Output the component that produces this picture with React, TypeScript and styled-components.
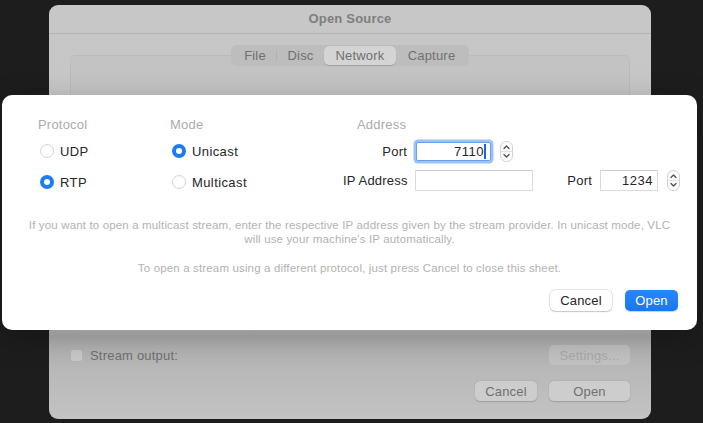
import React from 'react';
import styled, { createGlobalStyle } from 'styled-components';

const GlobalStyle = createGlobalStyle`
  html, body {
    margin: 0;
    padding: 0;
    background: #1d1d1d;
  }
  body {
    font-family: "Liberation Sans", Arial, sans-serif;
    letter-spacing: 0.2px;
    -webkit-font-smoothing: antialiased;
  }
`;

const Screen = styled.div`
  position: relative;
  width: 703px;
  height: 423px;
  overflow: hidden;
  box-sizing: border-box;
  padding-top: 5px;
  background: #1d1d1d;
`;

/* ---------- backdrop window ---------- */

const Window = styled.div`
  margin-left: 49px;
  width: 602px;
  height: 414px;
  border-radius: 9px;
  background: linear-gradient(#c7c7c7 0%, #c4c4c4 78%, #b1b1b1 80%, #c3c3c3 100%);
  display: flex;
  flex-direction: column;
  overflow: hidden;
`;

const TitleBar = styled.div`
  height: 27px;
  padding-bottom: 1px;
  flex-shrink: 0;
  border-bottom: 1px solid #b3b3b3;
  display: flex;
  align-items: center;
  justify-content: center;
  font-size: 13px;
  font-weight: bold;
  color: #7e7e7e;
`;

const TabPane = styled.div`
  display: flex;
  flex-direction: column;
  padding: 11px 21px 0;
`;

const Tabs = styled.div`
  align-self: center;
  position: relative;
  z-index: 1;
  display: flex;
  height: 21px;
  margin-bottom: -11px;
  padding: 0 2px;
  border-radius: 6px;
  background: #bdbdbd;
`;

const Tab = styled.div<{ $w: number; $active?: boolean; $sep?: boolean }>`
  width: ${(p) => p.$w}px;
  display: flex;
  align-items: center;
  justify-content: center;
  position: relative;
  font-size: 13px;
  color: #707070;
  border-radius: 5px;
  margin: 1px 0;
  background: ${(p) => (p.$active ? '#d4d4d4' : 'transparent')};
  box-shadow: ${(p) => (p.$active ? '0 0.5px 1px rgba(0,0,0,0.15)' : 'none')};
  &::after {
    content: '';
    display: ${(p) => (p.$sep ? 'block' : 'none')};
    position: absolute;
    right: 0;
    top: 5px;
    bottom: 5px;
    width: 1px;
    background: #b0b0b0;
  }
`;

const TabBox = styled.div`
  height: 277px;
  box-sizing: border-box;
  border: 1px solid #bbbbbb;
  border-radius: 5px;
  background: #c3c3c3;
`;

const StreamRow = styled.div`
  display: flex;
  align-items: center;
  justify-content: space-between;
  height: 20px;
  margin: 13px 21px 0;
`;

const CheckLabel = styled.label`
  display: flex;
  align-items: center;
  gap: 7px;
  font-size: 13px;
  color: #707070;
`;

const CheckBox = styled.span`
  width: 13px;
  height: 13px;
  box-sizing: border-box;
  border: 1px solid #b4b4b4;
  border-radius: 3px;
  background: #c9c9c9;
`;

const BackButton = styled.div<{ $w: number; $disabled?: boolean }>`
  width: ${(p) => p.$w}px;
  height: 20px;
  display: flex;
  align-items: center;
  justify-content: center;
  border-radius: 5px;
  font-size: 13px;
  color: ${(p) => (p.$disabled ? '#a9a9a9' : '#707070')};
  background: ${(p) => (p.$disabled ? '#c2c2c2' : '#cdcdcd')};
  box-shadow: ${(p) =>
    p.$disabled ? 'none' : '0 0.5px 1.5px rgba(0,0,0,0.18)'};
`;

const BackButtons = styled.div`
  display: flex;
  justify-content: flex-end;
  gap: 12px;
  margin: 16px 21px 0;
`;

/* ---------- network sheet ---------- */

const Sheet = styled.div`
  position: absolute;
  left: 2px;
  top: 95px;
  width: 695px;
  height: 235px;
  box-sizing: border-box;
  padding: 22px 19px 19px;
  border-radius: 10px;
  background: #ffffff;
  box-shadow: 0 8px 30px rgba(0, 0, 0, 0.25);
  display: flex;
  flex-direction: column;
`;

const Groups = styled.div`
  display: flex;
  padding-left: 17px;
`;

const Group = styled.div<{ $w?: number }>`
  width: ${(p) => (p.$w ? `${p.$w}px` : 'auto')};
  flex: none;
  display: flex;
  flex-direction: column;
`;

const GroupTitle = styled.div<{ $indent?: number }>`
  height: 16px;
  line-height: 16px;
  font-size: 13px;
  color: #ababab;
  margin-left: ${(p) => p.$indent || 0}px;
`;

const RadioList = styled.div`
  display: flex;
  flex-direction: column;
  gap: 11px;
  margin-top: 8px;
`;

const RadioRow = styled.label`
  height: 20px;
  display: flex;
  align-items: center;
  gap: 6px;
  padding-left: 2px;
  font-size: 13px;
  letter-spacing: 0.4px;
  color: #262626;
`;

const RadioDot = styled.span<{ $on?: boolean }>`
  width: 14px;
  height: 14px;
  box-sizing: border-box;
  border-radius: 50%;
  display: flex;
  align-items: center;
  justify-content: center;
  background: ${(p) => (p.$on ? '#1b7cf4' : '#ffffff')};
  border: ${(p) => (p.$on ? 'none' : '1px solid #d6d6d6')};
  box-shadow: ${(p) => (p.$on ? 'none' : 'inset 0 0.5px 1px rgba(0,0,0,0.06)')};
  &::after {
    content: '';
    display: ${(p) => (p.$on ? 'block' : 'none')};
    width: 6px;
    height: 6px;
    border-radius: 50%;
    background: #ffffff;
  }
`;

const AddrRows = styled.div`
  display: flex;
  flex-direction: column;
  gap: 8px;
  margin-top: 8px;
`;

const AddrRow = styled.div`
  display: flex;
  align-items: center;
  height: 21px;
  & > * {
    flex: none;
  }
`;

const FieldLabel = styled.span<{ $w: number }>`
  width: ${(p) => p.$w}px;
  text-align: right;
  white-space: nowrap;
  font-size: 13px;
  color: #262626;
  margin-right: 8px;
`;

const Field = styled.div<{ $w: number; $focus?: boolean }>`
  width: ${(p) => p.$w}px;
  height: ${(p) => (p.$focus ? 19 : 21)}px;
  box-sizing: border-box;
  display: flex;
  align-items: center;
  justify-content: flex-end;
  padding-right: 4px;
  font-size: 13px;
  letter-spacing: 0.5px;
  color: #262626;
  background: #ffffff;
  border: 1px solid ${(p) => (p.$focus ? '#6a9ff0' : '#dadada')};
  border-top-color: ${(p) => (p.$focus ? '#6a9ff0' : '#cfcfcf')};
  border-radius: ${(p) => (p.$focus ? 2 : 0)}px;
  box-shadow: ${(p) => (p.$focus ? '0 0 0 2.5px rgba(72,145,245,0.55)' : 'none')};
  margin-left: ${(p) => (p.$focus ? 1 : 0)}px;
`;

const Caret = styled.span`
  width: 2px;
  height: 15px;
  background: #1a64e0;
`;

const StepperWrap = styled.span<{ $gap: number }>`
  display: flex;
  margin-left: ${(p) => p.$gap}px;
`;

const Description = styled.div`
  margin-top: 26px;
  text-align: center;
  font-size: 11.5px;
  letter-spacing: 0.15px;
  line-height: 14px;
  color: #b2b2b2;
  p {
    margin: 0;
  }
  p + p {
    margin-top: 15px;
  }
`;

const SheetButtons = styled.div`
  margin-top: auto;
  display: flex;
  justify-content: flex-end;
  gap: 13px;
`;

const SheetButton = styled.div<{ $w: number; $primary?: boolean }>`
  width: ${(p) => p.$w}px;
  height: 21px;
  box-sizing: border-box;
  display: flex;
  align-items: center;
  justify-content: center;
  border-radius: 5px;
  font-size: 13px;
  color: ${(p) => (p.$primary ? '#ffffff' : '#262626')};
  background: ${(p) => (p.$primary ? 'linear-gradient(#2a86f8, #1877f2)' : '#ffffff')};
  box-shadow: ${(p) =>
    p.$primary
      ? '0 0.5px 1px rgba(0,0,0,0.2)'
      : '0 0 0 0.5px rgba(0,0,0,0.18), 0 1px 1.5px rgba(0,0,0,0.15)'};
`;

function Stepper({ gap }: { gap: number }) {
  return (
    <StepperWrap $gap={gap}>
      <svg width="13" height="21" viewBox="0 0 13 21">
        <rect x="0.5" y="0.5" width="12" height="20" rx="5.5" fill="#fbfbfb" stroke="#d3d3d3" />
        <line x1="1" y1="10.5" x2="12" y2="10.5" stroke="#e2e2e2" />
        <path d="M4 7.5 L6.5 5 L9 7.5" fill="none" stroke="#4a4a4a" strokeWidth="1.2" strokeLinecap="round" strokeLinejoin="round" />
        <path d="M4 13.5 L6.5 16 L9 13.5" fill="none" stroke="#4a4a4a" strokeWidth="1.2" strokeLinecap="round" strokeLinejoin="round" />
      </svg>
    </StepperWrap>
  );
}

export default function App() {
  const tabs = [
    { label: 'File', w: 44, sep: true },
    { label: 'Disc', w: 47 },
    { label: 'Network', w: 72, active: true },
    { label: 'Capture', w: 71 },
  ];

  return (
    <>
      <GlobalStyle />
      <Screen>
        <Window>
          <TitleBar>Open Source</TitleBar>
          <TabPane>
            <Tabs>
              {tabs.map((t) => (
                <Tab key={t.label} $w={t.w} $active={t.active} $sep={t.sep}>
                  {t.label}
                </Tab>
              ))}
            </Tabs>
            <TabBox />
          </TabPane>
          <StreamRow>
            <CheckLabel>
              <CheckBox />
              Stream output:
            </CheckLabel>
            <BackButton $w={81} $disabled>Settings...</BackButton>
          </StreamRow>
          <BackButtons>
            <BackButton $w={62}>Cancel</BackButton>
            <BackButton $w={81}>Open</BackButton>
          </BackButtons>
        </Window>

        <Sheet>
          <Groups>
            <Group $w={132}>
              <GroupTitle>Protocol</GroupTitle>
              <RadioList>
                <RadioRow><RadioDot />UDP</RadioRow>
                <RadioRow><RadioDot $on />RTP</RadioRow>
              </RadioList>
            </Group>
            <Group $w={173}>
              <GroupTitle>Mode</GroupTitle>
              <RadioList>
                <RadioRow><RadioDot $on />Unicast</RadioRow>
                <RadioRow><RadioDot />Multicast</RadioRow>
              </RadioList>
            </Group>
            <Group>
              <GroupTitle $indent={14}>Address</GroupTitle>
              <AddrRows>
                <AddrRow>
                  <FieldLabel $w={64}>Port</FieldLabel>
                  <Field $w={75} $focus>
                    7110
                    <Caret />
                  </Field>
                  <Stepper gap={9} />
                </AddrRow>
                <AddrRow>
                  <FieldLabel $w={64}>IP Address</FieldLabel>
                  <Field $w={118} />
                  <FieldLabel $w={59}>Port</FieldLabel>
                  <Field $w={58}>1234</Field>
                  <Stepper gap={9} />
                </AddrRow>
              </AddrRows>
            </Group>
          </Groups>

          <Description>
            <p>
              If you want to open a multicast stream, enter the respective IP address given by the stream provider. In unicast mode, VLC
              <br />
              will use your machine's IP automatically.
            </p>
            <p>To open a stream using a different protocol, just press Cancel to close this sheet.</p>
          </Description>

          <SheetButtons>
            <SheetButton $w={62}>Cancel</SheetButton>
            <SheetButton $w={53} $primary>Open</SheetButton>
          </SheetButtons>
        </Sheet>
      </Screen>
    </>
  );
}
